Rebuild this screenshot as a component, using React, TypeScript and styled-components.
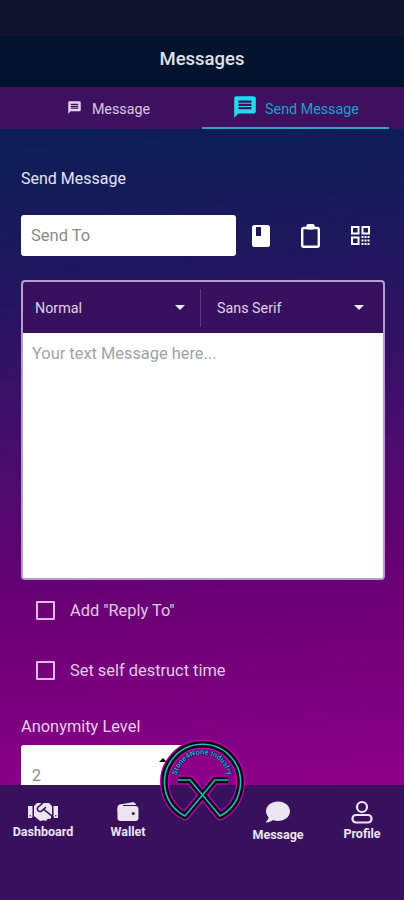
import React from 'react';
import styled, { createGlobalStyle } from 'styled-components';
import { FaHandshake, FaComment } from 'react-icons/fa';
import { MdMessage } from 'react-icons/md';
import { IoWallet } from 'react-icons/io5';

const GlobalStyle = createGlobalStyle`
  html, body {
    margin: 0;
    padding: 0;
    background: #38115c;
  }
  * {
    box-sizing: border-box;
  }
`;

const Screen = styled.div`
  position: relative;
  display: flex;
  flex-direction: column;
  width: 404px;
  height: 900px;
  overflow: hidden;
  font-family: Roboto, "Liberation Sans", sans-serif;
  color: #fff;
`;

const StatusBar = styled.div`
  height: 36px;
  flex: none;
  background: #10142f;
`;

const Header = styled.header`
  display: flex;
  align-items: center;
  justify-content: center;
  flex: none;
  height: 51px;
  padding-bottom: 6px;
  background: #02142d;
  font-size: 18.5px;
  font-weight: 500;
  color: #dfe1e6;
`;

const Tabs = styled.nav`
  display: grid;
  grid-template-columns: 1fr 1fr;
  flex: none;
  height: 42px;
  padding: 0 15px;
  background: #3e1160;
`;

const Tab = styled.div<{ $active?: boolean }>`
  display: flex;
  align-items: center;
  justify-content: center;
  gap: ${({ $active }) => ($active ? '7px' : '10px')};
  padding-top: 4px;
  font-size: 14.3px;
  color: ${({ $active }) => ($active ? '#1f9ecb' : '#d9c6e6')};
  border-bottom: 2px solid ${({ $active }) => ($active ? '#2aa3c8' : 'transparent')};
  svg {
    margin-top: -4px;
    color: ${({ $active }) => ($active ? '#1ddcf0' : '#e0d2ea')};
  }
`;

const Content = styled.main`
  flex: 1;
  min-height: 0;
  overflow: hidden;
  padding: 40px 19px 0 21px;
  background: linear-gradient(176deg, #0a1f54 0%, #241660 25%, #4a0c6c 50%, #6a0074 70%, #8c0088 100%);
`;

const SectionTitle = styled.div`
  font-size: 16px;
  line-height: 19px;
  color: #e6e3ee;
`;

const SendRow = styled.div`
  display: flex;
  align-items: center;
  margin-top: 27px;
`;

const SendInput = styled.div`
  display: flex;
  align-items: center;
  width: 215px;
  height: 41px;
  padding-left: 10px;
  background: #fff;
  border-radius: 3px;
  font-size: 16.5px;
  color: #8a8a8a;
`;

const ActionIcons = styled.div`
  display: flex;
  align-items: center;
  gap: 31px;
  margin-left: 16px;
  color: #fff;
`;

const Editor = styled.section`
  margin-top: 24px;
  height: 300px;
  display: flex;
  flex-direction: column;
  border: 2px solid #b69ad0;
  border-radius: 4px;
  overflow: hidden;
  background: #fff;
`;

const Toolbar = styled.div`
  display: grid;
  grid-template-columns: 178px 1fr;
  height: 51px;
  flex: none;
  align-items: center;
  background: #37115f;
`;

const FontSelect = styled.div<{ $divider?: boolean }>`
  display: flex;
  align-items: center;
  justify-content: space-between;
  height: 38px;
  padding: 0 ${({ $divider }) => ($divider ? '15px' : '19px')} 0 ${({ $divider }) => ($divider ? '12px' : '16px')};
  font-size: 14.3px;
  color: #ddd2e8;
  border-right: ${({ $divider }) => ($divider ? '1px solid #5b3a7c' : 'none')};
`;

const Caret = styled.span`
  width: 0;
  height: 0;
  border-left: 5px solid transparent;
  border-right: 5px solid transparent;
  border-top: 5px solid #f1e9f5;
`;

const MessageArea = styled.div`
  flex: 1;
  padding: 11px 9px;
  font-size: 16.4px;
  line-height: 19px;
  color: #a3a3a3;
  background: #fff;
`;

const CheckRow = styled.label<{ $top: number }>`
  display: flex;
  align-items: center;
  gap: 15px;
  height: 20px;
  margin-left: 15px;
  margin-top: ${({ $top }) => $top}px;
  font-size: 16.4px;
  color: #e3c8ea;
`;

const CheckBox = styled.span`
  width: 19px;
  height: 19px;
  border: 2px solid #e2b8e6;
  border-radius: 1px;
`;

const LevelLabel = styled.div`
  margin-top: 37px;
  font-size: 16.4px;
  line-height: 19px;
  color: #e8cdee;
`;

const LevelSelect = styled.div`
  display: flex;
  align-items: flex-start;
  justify-content: space-between;
  width: 162px;
  height: 60px;
  margin-top: 9px;
  padding: 21px 16px 0 11px;
  background: #fff;
  border-radius: 3px;
  font-size: 16px;
  color: #8a8a8a;
`;

const SpinnerUp = styled.span`
  width: 0;
  height: 0;
  margin-top: -8px;
  border-left: 4px solid transparent;
  border-right: 4px solid transparent;
  border-bottom: 4px solid #111;
`;

const BottomNav = styled.nav`
  display: grid;
  grid-template-columns: 86px 84px 66px 84px 84px;
  flex: none;
  height: 115px;
  padding-top: 15px;
  background: #38115c;
`;

const NavItem = styled.div<{ $gap: number }>`
  display: flex;
  flex-direction: column;
  align-items: center;
  gap: ${({ $gap }) => $gap}px;
  height: 50px;
  font-size: 12.5px;
  font-weight: 700;
  line-height: 14px;
  color: #ece4f2;
  svg {
    height: 24px;
    flex: none;
  }
`;

const NavSpacer = styled.div``;

const LogoBadge = styled.svg`
  position: absolute;
  left: 158px;
  top: 735px;
  width: 90px;
  height: 96px;
`;

function Logo() {
  const outline = 'M178 780 H190 L220 816 A38 38 0 1 0 185 816 L215 780 H228';
  return (
    <LogoBadge viewBox="158 735 90 96">
      <path d="M164.6 785 A38 38 0 1 1 240.4 785 Z" fill="#8b0087" />
      <path d={outline} fill="none" stroke="#c400b4" strokeWidth="9" strokeLinejoin="round" />
      <path d={outline} fill="none" stroke="#07070f" strokeWidth="6.5" strokeLinejoin="round" />
      <path d={outline} fill="none" stroke="#26b6c6" strokeWidth="1.6" strokeLinejoin="round" />
      <path id="logo-arc" d="M176.7 776 A26 26 0 0 1 228 776" fill="none" />
      <text
        fontFamily="Roboto, sans-serif"
        fontSize="7.5"
        fontWeight="700"
        fill="#2f9fd8"
        stroke="#0a0a30"
        strokeWidth="0.7"
        paintOrder="stroke"
      >
        <textPath href="#logo-arc" startOffset="50%" textAnchor="middle">
          Stone4None Industry
        </textPath>
      </text>
    </LogoBadge>
  );
}

function BookIcon() {
  return (
    <svg width="18" height="22" viewBox="0 0 18 22">
      <rect width="18" height="22" rx="2.5" fill="currentColor" />
      <rect x="4" y="2" width="5" height="9" fill="#1f1455" />
    </svg>
  );
}

function ClipboardIcon() {
  return (
    <svg width="19" height="25" viewBox="0 0 19 25" fill="none" stroke="currentColor" strokeWidth="2.4">
      <rect x="1.2" y="5" width="16.6" height="18.8" rx="1.5" />
      <rect x="6" y="1.8" width="7" height="4" rx="1.5" fill="currentColor" strokeWidth="1.5" />
    </svg>
  );
}

function QrIcon() {
  return (
    <svg width="19" height="19" viewBox="0 0 19 19" fill="none" stroke="currentColor" strokeWidth="2">
      <rect x="1" y="1" width="6.5" height="6.5" />
      <rect x="11.5" y="1" width="6.5" height="6.5" />
      <rect x="1" y="11.5" width="6.5" height="6.5" />
      <path d="M10.5 11h8.5M10.5 14.5h8.5M10.5 18h8.5" strokeDasharray="2 1" strokeWidth="1.8" />
    </svg>
  );
}

function ProfileIcon() {
  return (
    <svg width="24" height="24" viewBox="0 0 24 24" fill="none" stroke="currentColor" strokeWidth="2.2">
      <circle cx="12" cy="7" r="5" />
      <rect x="2.5" y="15" width="19" height="7.5" rx="3.5" />
    </svg>
  );
}

export default function App() {
  return (
    <Screen>
      <GlobalStyle />
      <StatusBar />
      <Header>Messages</Header>
      <Tabs>
        <Tab>
          <MdMessage size={15} />
          Message
        </Tab>
        <Tab $active>
          <MdMessage size={26} />
          Send Message
        </Tab>
      </Tabs>
      <Content>
        <SectionTitle>Send Message</SectionTitle>
        <SendRow>
          <SendInput>Send To</SendInput>
          <ActionIcons>
            <BookIcon />
            <ClipboardIcon />
            <QrIcon />
          </ActionIcons>
        </SendRow>
        <Editor>
          <Toolbar>
            <FontSelect $divider>
              Normal
              <Caret />
            </FontSelect>
            <FontSelect>
              Sans Serif
              <Caret />
            </FontSelect>
          </Toolbar>
          <MessageArea>Your text Message here...</MessageArea>
        </Editor>
        <CheckRow $top={20}>
          <CheckBox />
          Add "Reply To"
        </CheckRow>
        <CheckRow $top={40}>
          <CheckBox />
          Set self destruct time
        </CheckRow>
        <LevelLabel>Anonymity Level</LevelLabel>
        <LevelSelect>
          2
          <SpinnerUp />
        </LevelSelect>
      </Content>
      <BottomNav>
        <NavItem $gap={1}>
          <FaHandshake size={30} />
          Dashboard
        </NavItem>
        <NavItem $gap={1}>
          <IoWallet size={26} />
          Wallet
        </NavItem>
        <NavSpacer />
        <NavItem $gap={4}>
          <FaComment size={24} />
          Message
        </NavItem>
        <NavItem $gap={3}>
          <ProfileIcon />
          Profile
        </NavItem>
      </BottomNav>
      <Logo />
    </Screen>
  );
}
